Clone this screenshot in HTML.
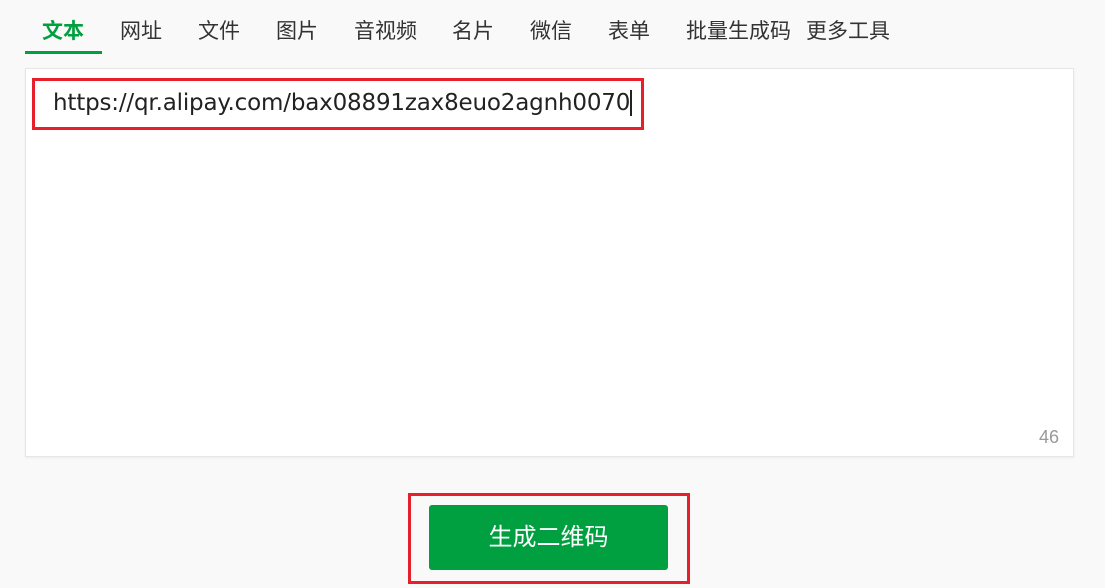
<!DOCTYPE html>
<html><head><meta charset="utf-8"><style>
body{margin:0;width:1105px;height:588px;background:#f9f9f9;font-family:"Liberation Sans","Noto Sans CJK SC",sans-serif;position:relative;overflow:hidden}
.t{position:absolute;top:19px;font-size:21px;color:#333;line-height:26px}
.a{color:#00a040;font-weight:bold}
.ul{position:absolute;left:25px;top:51px;width:77px;height:3px;background:#00a040}
.box{position:absolute;left:25px;top:68px;width:1047px;height:387px;background:#fff;border:1px solid #e6e6e6;box-shadow:0 1px 2px rgba(0,0,0,.06)}
.r1{position:absolute;left:32px;top:78px;width:606px;height:46px;border:3px solid #e5202b}
.txt{position:absolute;left:53px;top:88px;font-size:23px;color:#222;line-height:30px;font-family:"DejaVu Sans","Liberation Sans",sans-serif;letter-spacing:-0.18px;white-space:nowrap}
.cur{position:absolute;left:630px;top:90px;width:2px;height:26px;background:#222}
.cnt{position:absolute;left:1039px;top:427px;font-size:18px;color:#999}
.r2{position:absolute;left:408px;top:493px;width:276px;height:85px;border:3px solid #e5202b}
.btn{position:absolute;left:429px;top:505px;width:239px;height:65px;background:#00a040;border-radius:3px;color:#fff;font-size:24px;text-align:center;line-height:65px}
</style></head><body>
<div class="t a" style="left:42px">文本</div>
<div class="t" style="left:120px">网址</div>
<div class="t" style="left:198px">文件</div>
<div class="t" style="left:276px">图片</div>
<div class="t" style="left:354px">音视频</div>
<div class="t" style="left:452px">名片</div>
<div class="t" style="left:530px">微信</div>
<div class="t" style="left:608px">表单</div>
<div class="t" style="left:686px">批量生成码</div>
<div class="t" style="left:806px">更多工具</div>
<div class="ul"></div>
<div class="box"></div>
<div class="r1"></div>
<div class="txt">https://qr.alipay.com/bax08891zax8euo2agnh0070</div>
<div class="cur"></div>
<div class="cnt">46</div>
<div class="r2"></div>
<div class="btn">生成二维码</div>
</body></html>
